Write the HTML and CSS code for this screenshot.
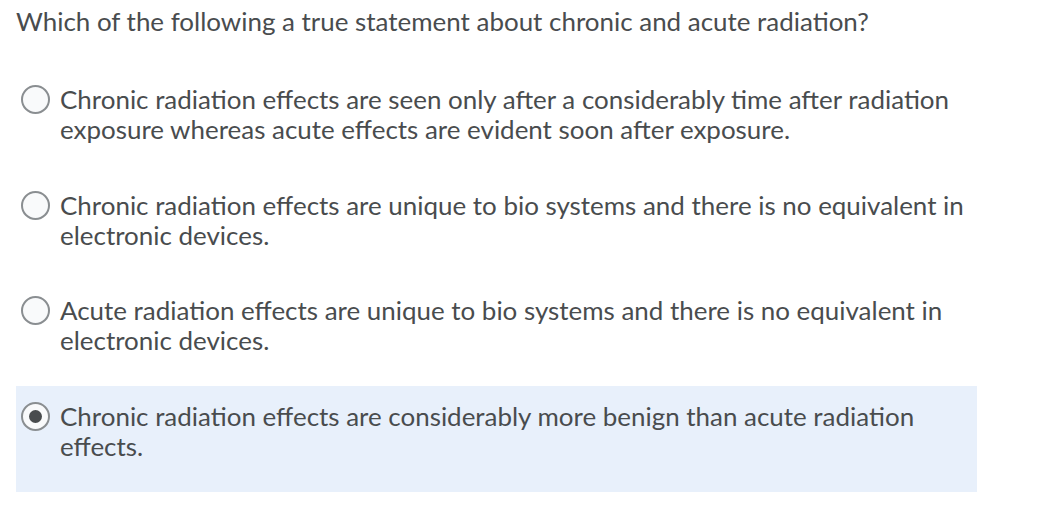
FILE: index.html
```html
<!DOCTYPE html>
<html>
<head>
<meta charset="utf-8">
<link rel="stylesheet" href="styles.css">
</head>
<body>
<div class="page">
  <div class="question">Which of the following a true statement about chronic and acute radiation?</div>
  <div class="options">
    <label class="option">
      <span class="radio"></span>
      <span class="text">Chronic radiation effects are seen only after a considerably time after radiation exposure whereas acute effects are evident soon after exposure.</span>
    </label>
    <label class="option">
      <span class="radio"></span>
      <span class="text">Chronic radiation effects are unique to bio systems and there is no equivalent in electronic devices.</span>
    </label>
    <label class="option">
      <span class="radio"></span>
      <span class="text">Acute radiation effects are unique to bio systems and there is no equivalent in electronic devices.</span>
    </label>
    <label class="option selected">
      <span class="radio checked"></span>
      <span class="text">Chronic radiation effects are considerably more benign than acute radiation effects.</span>
    </label>
  </div>
</div>
</body>
</html>
```

FILE: styles.css
```css
html, body {
  margin: 0;
  padding: 0;
  background: #ffffff;
}
body {
  font-family: Lato, "Open Sans", sans-serif;
  color: #494c4e;
  font-size: 25.95px;
  line-height: 30px;
}
.page {
  padding: 6px 0 0 16px;
  width: 961px;
}
.question {
  margin-bottom: 33px;
}
.options {
  display: flex;
  flex-direction: column;
}
.option {
  display: flex;
  align-items: flex-start;
  gap: 10px;
  padding: 15px 0 30.7px 5px;
  height: 60px;
}
.option.selected {
  background: #e8f0fb;
}
.radio {
  flex: none;
  box-sizing: border-box;
  width: 29px;
  height: 29px;
  margin-top: 1px;
  border: 2px solid #8a8e91;
  border-radius: 50%;
  background: #f9fafb;
  display: flex;
  align-items: center;
  justify-content: center;
}
.radio.checked::after {
  content: "";
  width: 13px;
  height: 13px;
  border-radius: 50%;
  background: #494c4e;
}
.text {
  flex: 1;
  padding-right: 10px;
}
```
